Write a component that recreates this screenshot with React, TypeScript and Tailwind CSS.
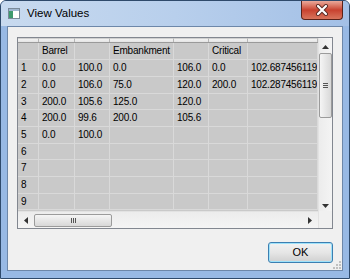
const cols = [21, 36, 35, 64, 35, 39, 70];
const heads = ['', 'Barrel', '', 'Embankment', '', 'Critical', ''];
const rows: string[][] = [
  ['1', '0.0', '100.0', '0.0', '106.0', '0.0', '102.687456119'],
  ['2', '0.0', '106.0', '75.0', '120.0', '200.0', '102.287456119'],
  ['3', '200.0', '105.6', '125.0', '120.0', '', ''],
  ['4', '200.0', '99.6', '200.0', '105.6', '', ''],
  ['5', '0.0', '100.0', '', '', '', ''],
  ['6', '', '', '', '', '', ''],
  ['7', '', '', '', '', '', ''],
  ['8', '', '', '', '', '', ''],
  ['9', '', '', '', '', '', ''],
];
const rowH = [17, 17, 16, 17, 17, 16, 17, 17, 16];

const WinIcon = () => (
  <svg width="12" height="11" viewBox="0 0 12 11">
    <rect x="0.5" y="0.5" width="11" height="10" fill="#fff" stroke="#7a8a99" />
    <rect x="1" y="1" width="10" height="2" fill="#9fb6d0" />
    <rect x="1" y="3" width="4" height="7" fill="#3f9a6e" />
  </svg>
);

const Row = ({ cells, h }: { cells: string[]; h: number }) => (
  <div className="flex border-b border-[#d9d9d9]" style={{ height: h }}>
    {cells.map((c, i) => (
      <div
        key={i}
        className="shrink-0 overflow-hidden whitespace-nowrap border-r border-[#d9d9d9] pl-[3px] leading-none flex items-center tracking-[-0.2px]"
        style={{ width: cols[i] }}
      >
        {c}
      </div>
    ))}
  </div>
);

export default function App() {
  return (
    <div className="w-[350px] h-[279px] bg-white">
      <div
        className="relative w-[350px] h-[279px] flex flex-col rounded-t-[6px] border border-[#2f4a6b] bg-[#98b9e4] px-[6px] pb-[7px] text-black"
        style={{ fontFamily: '"Liberation Sans", Arial, sans-serif' }}
      >
        <div className="h-[25px] shrink-0 flex items-center gap-[7px] -mx-[6px] px-[7px] rounded-t-[5px] bg-gradient-to-r from-[#c8daef] via-[#b8cfec] to-[#a3c0e6]">
          <WinIcon />
          <span className="text-[11.5px] text-black mt-[1px]">View Values</span>
        </div>
        <div className="absolute right-[6px] top-0 w-[42px] h-[19px] rounded-b-[4px] border border-t-0 border-[#5a2219] bg-gradient-to-b from-[#e9a99b] via-[#c8412f] to-[#d8745c] flex items-center justify-center">
          <svg width="14" height="12" viewBox="0 0 14 12">
            <path d="M3 2 L11 10 M11 2 L3 10" stroke="#5a2a24" strokeWidth="4" strokeLinecap="round" />
            <path d="M3 2 L11 10 M11 2 L3 10" stroke="#fff" strokeWidth="2.2" strokeLinecap="round" />
          </svg>
        </div>
        <div className="flex-1 flex flex-col border border-[#6d87a9] bg-[#f0f0f0] pl-[9px] pr-[9px] pt-[10px]">
          <div className="w-[316px] h-[192px] border border-[#828790] flex text-[10px]">
            <div className="flex-1 flex flex-col min-w-0">
              <div className="h-[5px] flex border-b border-[#9a9a9a] bg-gradient-to-b from-[#f7f7f7] to-[#e4e4e4]">
                {cols.map((w, i) => (
                  <div key={i} className="shrink-0 border-r border-[#b5b5b5] border-t border-t-[#d0d0d0]" style={{ width: w }} />
                ))}
              </div>
              <div className="flex-1 bg-[#c9c9c9] overflow-hidden">
                <Row cells={heads} h={17} />
                {rows.map((r, i) => (
                  <Row key={i} cells={r} h={rowH[i]} />
                ))}
              </div>
              <div className="h-[17px] shrink-0 flex items-center bg-gradient-to-b from-[#ececec] to-[#f4f4f4] border-t border-[#e2e2e2]">
                <div className="w-[16px] flex justify-center">
                  <svg width="4" height="7" viewBox="0 0 4 7"><path d="M4 0 L0 3.5 L4 7Z" fill="#333" /></svg>
                </div>
                <div className="w-[78px] h-[13px] rounded-[2px] border border-[#9b9b9b] bg-gradient-to-b from-[#f5f5f5] to-[#d8d8d8] flex items-center justify-center gap-[1px]">
                  <span className="w-px h-[5px] bg-[#555]" />
                  <span className="w-px h-[5px] bg-[#555]" />
                  <span className="w-px h-[5px] bg-[#555]" />
                </div>
                <div className="flex-1" />
                <div className="w-[16px] flex justify-center">
                  <svg width="4" height="7" viewBox="0 0 4 7"><path d="M0 0 L4 3.5 L0 7Z" fill="#333" /></svg>
                </div>
              </div>
            </div>
            <div className="w-[14px] flex flex-col bg-gradient-to-r from-[#ececec] to-[#f4f4f4] border-l border-[#e2e2e2]">
              <div className="h-[15px] flex items-center justify-center pt-[2px]">
                <svg width="7" height="4" viewBox="0 0 7 4"><path d="M0 4 L3.5 0 L7 4Z" fill="#333" /></svg>
              </div>
              <div className="h-[65px] rounded-[2px] border border-[#9b9b9b] bg-gradient-to-r from-[#f5f5f5] to-[#d8d8d8] flex flex-col items-center justify-center gap-[1px]">
                <span className="w-[5px] h-px bg-[#555]" />
                <span className="w-[5px] h-px bg-[#555]" />
                <span className="w-[5px] h-px bg-[#555]" />
              </div>
              <div className="flex-1 flex items-end justify-center pb-[3px]">
                <svg width="7" height="4" viewBox="0 0 7 4"><path d="M0 0 L3.5 4 L7 0Z" fill="#333" /></svg>
              </div>
              <div className="h-[17px] bg-[#f0f0f0]" />
            </div>
          </div>
          <div className="flex justify-end mt-[13px]">
            <button className="w-[65px] h-[21px] rounded-[3px] border border-[#3c7fb1] bg-gradient-to-b from-[#f2f2f2] via-[#e6e6e6] to-[#d0d0d0] shadow-[inset_0_0_0_1px_#9fe2fa] text-[11px] flex items-center justify-center">
              OK
            </button>
          </div>
          <div className="flex-1 relative">
            <svg className="absolute right-[-8px] bottom-[1px]" width="8" height="8" viewBox="0 0 8 8">
              {[[6, 0], [6, 3], [3, 3], [6, 6], [3, 6], [0, 6]].map(([x, y], i) => (
                <rect key={i} x={x} y={y} width="2" height="2" fill="#c0c0c0" />
              ))}
            </svg>
          </div>
        </div>
      </div>
    </div>
  );
}
